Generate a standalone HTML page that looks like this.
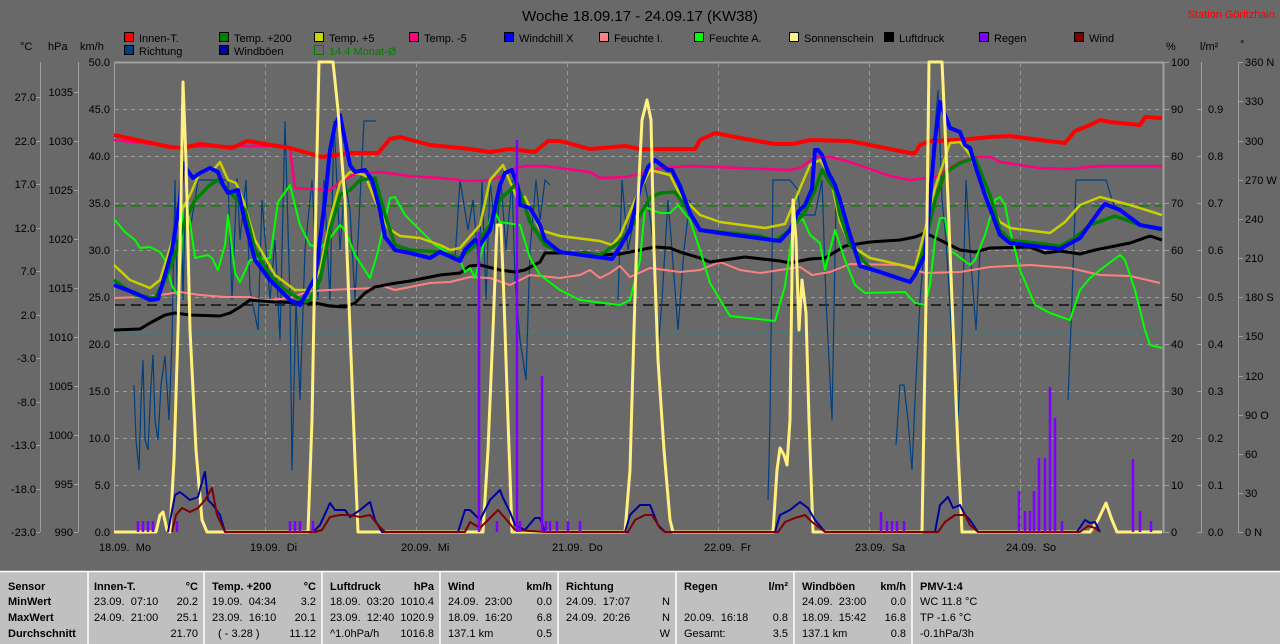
<!DOCTYPE html>
<html><head><meta charset="utf-8"><style>
html,body{margin:0;padding:0;background:#696969;}
svg{display:block;font-family:"Liberation Sans",sans-serif;}
</style></head><body>
<svg width="1280" height="644" viewBox="0 0 1280 644" xmlns="http://www.w3.org/2000/svg">
<rect width="1280" height="644" fill="#696969"/>
<text x="640" y="21" font-size="15" text-anchor="middle" fill="#000">Woche 18.09.17 - 24.09.17 (KW38)</text>
<text x="1275" y="18" font-size="11" text-anchor="end" fill="#ff0000">Station Göritzhain</text>
<g font-size="11" fill="#000">
<g stroke="#000" stroke-width="1">
<rect x="124.5" y="32.5" width="9" height="9" fill="#ff0000"/>
<rect x="219.5" y="32.5" width="9" height="9" fill="#008000"/>
<rect x="314.5" y="32.5" width="9" height="9" fill="#c8d800"/>
<rect x="409.5" y="32.5" width="9" height="9" fill="#ff0080"/>
<rect x="504.5" y="32.5" width="9" height="9" fill="#0000ff"/>
<rect x="599.5" y="32.5" width="9" height="9" fill="#ff8080"/>
<rect x="694.5" y="32.5" width="9" height="9" fill="#00ff00"/>
<rect x="789.5" y="32.5" width="9" height="9" fill="#fff080"/>
<rect x="884.5" y="32.5" width="9" height="9" fill="#000"/>
<rect x="979.5" y="32.5" width="9" height="9" fill="#8000ff"/>
<rect x="1074.5" y="32.5" width="9" height="9" fill="#800000"/>
<rect x="124.5" y="45.5" width="9" height="9" fill="#004080"/>
<rect x="219.5" y="45.5" width="9" height="9" fill="#0000a0"/>
</g>
<rect x="314.5" y="45.5" width="9" height="9" fill="none" stroke="#008000"/>
<text x="139" y="42">Innen-T.</text>
<text x="234" y="42">Temp. +200</text>
<text x="329" y="42">Temp. +5</text>
<text x="424" y="42">Temp. -5</text>
<text x="519" y="42">Windchill X</text>
<text x="614" y="42">Feuchte I.</text>
<text x="709" y="42">Feuchte A.</text>
<text x="804" y="42">Sonnenschein</text>
<text x="899" y="42">Luftdruck</text>
<text x="994" y="42">Regen</text>
<text x="1089" y="42">Wind</text>
<text x="139" y="55">Richtung</text>
<text x="234" y="55">Windböen</text>
<text x="329" y="55" fill="#008000">14.4 Monat-Ø</text>
<text x="20" y="50">°C</text><text x="48" y="50">hPa</text><text x="80" y="50">km/h</text>
<text x="1166" y="50">%</text><text x="1200" y="50">l/m²</text><text x="1240" y="48">°</text>
</g>
<g stroke="#a0a0a0" stroke-width="1" fill="none">
<line x1="40.5" y1="62" x2="40.5" y2="532"/>
<line x1="78.5" y1="62" x2="78.5" y2="532"/>
<line x1="114.5" y1="62" x2="114.5" y2="533"/>
<line x1="114" y1="62.5" x2="1164" y2="62.5" stroke-width="2"/>
<line x1="1163.5" y1="62" x2="1163.5" y2="533" stroke-width="2"/>
<line x1="1201.5" y1="62" x2="1201.5" y2="532"/>
<line x1="1238.5" y1="62" x2="1238.5" y2="532"/>
</g>
<g stroke="#a0a0a0" stroke-width="1">
<path d="M36 97.5h4M36 141.5h4M36 184.5h4M36 228.5h4M36 271.5h4M36 315.5h4M36 358.5h4M36 402.5h4M36 445.5h4M36 489.5h4M36 532.5h4"/>
<path d="M74 92.5h4M74 141.5h4M74 190.5h4M74 239.5h4M74 288.5h4M74 337.5h4M74 386.5h4M74 435.5h4M74 484.5h4M74 532.5h4"/>
<path d="M1164 62.5h5M1164 109.5h5M1164 156.5h5M1164 203.5h5M1164 250.5h5M1164 297.5h5M1164 344.5h5M1164 391.5h5M1164 438.5h5M1164 485.5h5M1164 532.5h5"/>
<path d="M1197 109.5h5M1197 156.5h5M1197 203.5h5M1197 250.5h5M1197 297.5h5M1197 344.5h5M1197 391.5h5M1197 438.5h5M1197 485.5h5M1197 532.5h5"/>
<path d="M1238 62.5h5M1238 101.5h5M1238 141.5h5M1238 180.5h5M1238 219.5h5M1238 258.5h5M1238 297.5h5M1238 336.5h5M1238 376.5h5M1238 415.5h5M1238 454.5h5M1238 493.5h5M1238 532.5h5"/>
</g>
<g font-size="11" fill="#000" text-anchor="end">
<text x="36" y="101">27.0</text><text x="36" y="145">22.0</text><text x="36" y="188">17.0</text><text x="36" y="232">12.0</text><text x="36" y="275">7.0</text><text x="36" y="319">2.0</text><text x="36" y="362">-3.0</text><text x="36" y="406">-8.0</text><text x="36" y="449">-13.0</text><text x="36" y="493">-18.0</text><text x="36" y="536">-23.0</text>
<text x="73" y="96">1035</text><text x="73" y="145">1030</text><text x="73" y="194">1025</text><text x="73" y="243">1020</text><text x="73" y="292">1015</text><text x="73" y="341">1010</text><text x="73" y="390">1005</text><text x="73" y="439">1000</text><text x="73" y="488">995</text><text x="73" y="536">990</text>
<text x="110" y="66">50.0</text><text x="110" y="113">45.0</text><text x="110" y="160">40.0</text><text x="110" y="207">35.0</text><text x="110" y="254">30.0</text><text x="110" y="301">25.0</text><text x="110" y="348">20.0</text><text x="110" y="395">15.0</text><text x="110" y="442">10.0</text><text x="110" y="489">5.0</text><text x="110" y="536">0.0</text>
</g>
<g font-size="11" fill="#000">
<text x="1171" y="66">100</text><text x="1171" y="113">90</text><text x="1171" y="160">80</text><text x="1171" y="207">70</text><text x="1171" y="254">60</text><text x="1171" y="301">50</text><text x="1171" y="348">40</text><text x="1171" y="395">30</text><text x="1171" y="442">20</text><text x="1171" y="489">10</text><text x="1171" y="536">0</text>
<text x="1208" y="113">0.9</text><text x="1208" y="160">0.8</text><text x="1208" y="207">0.7</text><text x="1208" y="254">0.6</text><text x="1208" y="301">0.5</text><text x="1208" y="348">0.4</text><text x="1208" y="395">0.3</text><text x="1208" y="442">0.2</text><text x="1208" y="489">0.1</text><text x="1208" y="536">0.0</text>
<text x="1245" y="66">360 N</text><text x="1245" y="105">330</text><text x="1245" y="145">300</text><text x="1245" y="184">270 W</text><text x="1245" y="223">240</text><text x="1245" y="262">210</text><text x="1245" y="301">180 S</text><text x="1245" y="340">150</text><text x="1245" y="380">120</text><text x="1245" y="419">90 O</text><text x="1245" y="458">60</text><text x="1245" y="497">30</text><text x="1245" y="536">0 N</text>
<text x="99" y="551" xml:space="preserve">18.09.  Mo</text><text x="250" y="551" xml:space="preserve">19.09.  Di</text><text x="401" y="551" xml:space="preserve">20.09.  Mi</text><text x="552" y="551" xml:space="preserve">21.09.  Do</text><text x="704" y="551" xml:space="preserve">22.09.  Fr</text><text x="855" y="551" xml:space="preserve">23.09.  Sa</text><text x="1006" y="551" xml:space="preserve">24.09.  So</text>
</g>
<g stroke="#999" stroke-width="1" stroke-dasharray="4,4" fill="none">
<path d="M115 109.5H1162M115 156.5H1162M115 203.5H1162M115 250.5H1162M115 297.5H1162M115 344.5H1162M115 391.5H1162M115 438.5H1162M115 485.5H1162"/>
<path d="M265.5 63V532M416.5 63V532M567.5 63V532M718.5 63V532M869.5 63V532M1020.5 63V532"/>
</g>
<line x1="115" y1="206" x2="1162" y2="206" stroke="#008000" stroke-width="1.2" stroke-dasharray="10,6"/>
<line x1="115" y1="305" x2="1162" y2="305" stroke="#000" stroke-width="1.2" stroke-dasharray="10,6"/>
<line x1="115" y1="332" x2="1162" y2="332" stroke="#408080" stroke-width="1.2"/>
<polyline fill="none" stroke="#004080" stroke-width="1.2" points="134,385 136,440 139,470 141,400 143,360 145,440 148,450 151,385 153,355 155,420 158,440 161,385 165,356 169,420 172,340 175,180 178,340 181,180 183,300 186,178 190,230 195,200 198,180 228,180 232,300 237,178 240,240 246,180 250,290 258,330 262,200 266,250 270,300 275,240 280,340 285,121 290,300 292,470 296,300 300,400 305,250 312,180 318,300 324,180 330,300 334,121 340,250 345,180 350,210 355,300 360,200 364,121 376,121"/>
<polyline fill="none" stroke="#004080" stroke-width="1.2" points="455,260 460,180 468,230 473,200 479,270 482,180 486,300 490,180 496,240 501,180 506,250 512,180 515,280 520,340 526,380 530,250 536,180 540,220 545,180 550,185"/>
<polyline fill="none" stroke="#004080" stroke-width="1.2" points="618,300 622,180 628,250 634,220 640,170 645,185 648,200 654,250 658,350 662,300 668,200 672,250 678,330 684,250 690,200"/>
<polyline fill="none" stroke="#004080" stroke-width="1.2" points="768,500 770,420 773,180 790,180 798,190 800,215 815,215 822,180 826,300 832,420 836,200"/>
<polyline fill="none" stroke="#004080" stroke-width="1.2" points="896,445 900,385 904,385 908,420 912,470 915,400 920,300 924,250 930,200 934,140 938,90 942,200 946,240 952,340 958,420 962,330 966,180 970,250 976,330 980,250"/>
<polyline fill="none" stroke="#004080" stroke-width="1.2" points="1068,400 1072,300 1076,180 1106,180 1112,200 1116,210"/>
<g fill="none" stroke-linejoin="round">
<polyline stroke="#ff8080" stroke-width="2" points="114,298 140,297 160,295 180,292 200,295 225,297 250,297 260,300 270,300 290,298 310,291 330,290 350,289 375,288 380,285 395,290 410,287 430,283 450,282 470,277 490,278 510,285 530,275 560,278 580,275 590,270 600,278 610,273 620,266 630,277 650,268 680,272 700,270 720,262 740,270 760,273 780,270 800,267 812,275 830,272 850,264 900,265 925,273 960,272 990,267 1030,265 1070,268 1100,275 1130,276 1160,283"/>
<polyline stroke="#000" stroke-width="3" points="114,330 140,329 150,323 165,315 175,313 190,315 220,316 230,313 240,307 250,300 275,302 315,303 330,306 345,307 355,303 365,293 375,287 390,284 410,281 440,275 460,273 470,266 480,265 500,270 515,272 525,270 540,262 545,253 585,253 600,255 620,254 640,250 655,247 670,248 680,252 700,258 710,262 745,257 780,261 790,263 810,259 825,258 845,246 870,242 900,240 915,237 925,233 940,240 960,250 975,252 990,248 1030,247 1045,253 1060,251 1080,254 1095,250 1110,247 1130,243 1150,236 1162,240"/>
<polyline stroke="#00ff00" stroke-width="2" points="114,219 125,232 135,240 140,248 150,247 160,252 165,260 172,286 178,295 181,260 183,205 186,203 190,222 195,258 208,255 212,258 218,270 225,245 228,215 235,273 240,282 250,260 270,258 278,202 290,185 300,225 310,245 320,248 330,238 340,225 345,230 355,255 370,278 377,255 385,220 390,198 395,197 405,215 420,230 435,245 460,260 465,272 470,268 475,278 490,220 495,212 500,222 520,225 530,258 540,275 560,290 580,300 620,305 630,300 640,260 645,207 660,213 670,213 678,205 690,220 700,250 710,283 730,316 775,321 785,286 790,250 795,223 803,219 810,235 820,243 825,270 835,230 845,260 855,285 865,293 905,292 915,303 925,305 930,285 935,240 940,218 945,218 950,250 970,265 975,260 985,235 995,200 1000,197 1005,205 1010,230 1020,270 1035,305 1050,313 1070,320 1080,290 1090,278 1100,270 1120,255 1125,260 1135,290 1145,330 1150,345 1162,348"/>
<polyline stroke="#ff0080" stroke-width="2.5" points="114,140 180,147 240,146 280,146 290,148 295,188 330,190 340,182 355,174 380,172 410,176 440,178 470,181 490,180 505,175 515,168 525,166 545,166 590,172 600,178 625,177 650,172 660,168 690,166 740,168 790,170 800,168 815,157 830,157 850,162 890,176 910,180 935,177 960,162 975,157 990,157 1000,162 1040,168 1070,169 1100,166 1162,166"/>
<polyline stroke="#ff0000" stroke-width="4" points="114,135 170,147 183,148 200,144 232,148 247,141 265,144 290,148 322,157 350,153 378,153 390,139 400,137 430,145 470,149 490,152 510,149 535,152 548,141 560,141 590,149 625,146 640,149 695,149 700,140 715,133 740,138 775,144 793,144 810,140 850,141 880,147 910,153 915,153 920,145 930,141 960,140 990,137 1010,136 1040,140 1065,143 1075,131 1090,125 1100,120 1110,122 1140,125 1145,117 1162,118"/>
<polyline stroke="#c8d000" stroke-width="2.5" points="114,265 130,280 150,288 160,280 175,232 182,210 190,195 200,172 215,168 220,162 228,180 236,183 243,200 255,240 275,275 295,290 310,290 320,270 330,220 340,183 350,172 365,175 375,200 388,228 400,236 420,238 440,245 450,250 460,248 480,225 490,180 503,165 517,198 525,197 540,230 560,236 600,241 612,245 620,236 635,200 650,170 670,175 680,195 700,215 720,222 765,228 785,224 795,200 810,165 820,160 830,175 840,222 850,245 870,258 915,268 925,230 935,188 950,143 960,142 970,155 980,180 990,205 1000,222 1010,228 1050,233 1065,222 1080,205 1100,197 1130,205 1162,215"/>
<polyline stroke="#008000" stroke-width="3.5" points="114,280 135,295 155,298 165,280 175,255 185,220 195,200 210,185 218,180 230,192 245,210 255,250 270,275 285,290 305,302 310,300 320,280 330,230 340,195 350,190 360,180 375,178 385,215 395,245 410,250 440,252 460,258 475,245 490,225 500,200 515,185 520,192 530,222 545,245 560,252 600,255 620,242 640,215 650,198 660,193 675,192 690,213 700,230 760,236 775,241 790,230 805,212 815,190 822,170 835,190 840,215 850,245 870,268 890,276 910,282 915,275 925,245 935,200 945,173 960,163 975,158 990,195 1000,230 1010,240 1060,246 1075,238 1090,225 1115,216 1140,225 1162,230"/>
<polyline stroke="#0000ff" stroke-width="4" points="114,285 135,293 150,300 158,299 165,275 172,250 180,200 183,163 187,170 193,178 200,173 210,168 218,172 223,185 228,193 238,190 245,222 255,260 270,280 290,300 300,305 315,278 320,240 325,200 330,150 335,125 340,115 345,140 350,165 355,172 365,170 372,180 380,210 385,237 395,250 410,253 430,258 440,252 460,261 465,250 475,240 480,245 490,230 500,185 505,173 512,170 518,187 520,205 530,208 540,225 545,240 560,252 612,259 620,247 630,230 640,188 648,167 655,160 668,170 672,170 680,186 690,213 700,230 720,233 780,241 790,230 798,212 805,205 812,189 815,150 818,150 822,155 828,172 835,185 840,200 850,235 860,266 880,272 910,282 915,275 925,255 930,200 935,140 940,102 945,115 950,128 960,132 965,145 970,148 975,165 985,195 1000,235 1010,243 1060,249 1080,238 1100,210 1105,204 1120,210 1140,225 1162,229"/>
<polyline stroke="#fff080" stroke-width="3" points="114,532 156,532 160,515 163,512 167,530 170,532 174,460 178,330 181,200 183,82 186,160 190,330 196,450 202,520 207,532 308,532 312,420 316,200 319,62 333,62 338,110 345,200 350,330 355,460 358,532 483,532 488,450 493,330 497,225 501,225 504,300 508,420 512,532 625,532 630,470 634,330 638,200 642,120 647,100 651,120 654,250 658,360 664,450 670,520 673,532 773,532 777,470 780,448 784,455 787,465 790,420 793,200 796,240 799,330 802,280 806,313 809,420 813,532 922,532 926,300 929,62 942,62 946,150 952,300 958,450 962,532 1090,532 1098,520 1106,503 1112,520 1117,532 1162,532"/>
<polyline stroke="#0000a0" stroke-width="2" points="168,532 175,495 180,492 190,500 198,497 203,478 205,472 208,500 213,505 220,515 225,532 313,532 320,525 330,503 335,510 345,510 350,517 360,510 370,502 375,520 382,532 458,532 465,510 470,510 480,520 490,500 500,490 503,498 510,512 515,525 525,530 535,518 540,518 545,532 625,532 630,515 640,505 650,505 658,525 665,532 775,532 780,515 790,510 800,502 808,508 815,520 825,532 935,532 940,505 948,497 953,508 960,505 965,515 970,520 978,532 1077,532 1085,520 1090,523 1095,522 1100,532"/>
<polyline stroke="#800000" stroke-width="2" points="172,532 176,515 182,508 190,512 198,508 205,500 212,488 217,515 225,532 315,532 322,530 330,517 340,515 350,515 360,517 370,515 378,525 385,532 465,532 470,522 480,528 490,518 498,510 505,518 515,530 545,532 628,532 635,520 645,515 652,515 660,528 665,532 778,532 785,522 795,518 805,515 812,522 825,532 938,532 945,522 955,515 965,515 970,525 978,532 1080,532 1088,526 1095,528 1100,532"/>
</g>
<g stroke="#8000ff" stroke-width="2.5">
<path d="M138 532V521M143 532V521M148 532V521M153 532V521M177 532V521M290 532V521M295 532V521M300 532V521M313 532V521M479 532V232M497 532V521M517 532V140M520 532V521M542 532V376M546 532V521M550 532V521M557 532V521M568 532V521M580 532V521M881 532V512M887 532V521M892 532V521M897 532V521M904 532V521M1019 532V491M1025 532V511M1030 532V511M1034 532V491M1039 532V458M1045 532V458M1050 532V387M1055 532V418M1062 532V521M1133 532V459M1140 532V511M1151 532V521"/>
</g>
<rect x="0" y="571" width="1280" height="73" fill="#c0c0c0"/>
<line x1="0" y1="571.5" x2="1280" y2="571.5" stroke="#fff" stroke-width="1.5"/>
<g stroke="#fff" stroke-width="1.5">
<path d="M88 572V644M204 572V644M322 572V644M440 572V644M558 572V644M676 572V644M794 572V644M912 572V644"/>
</g>
<g font-size="11" fill="#000">
<g font-weight="bold">
<text x="8" y="590">Sensor</text><text x="8" y="605">MinWert</text><text x="8" y="621">MaxWert</text><text x="8" y="637">Durchschnitt</text>
<text x="94" y="590">Innen-T.</text><text x="198" y="590" text-anchor="end">°C</text>
<text x="212" y="590">Temp. +200</text><text x="316" y="590" text-anchor="end">°C</text>
<text x="330" y="590">Luftdruck</text><text x="434" y="590" text-anchor="end">hPa</text>
<text x="448" y="590">Wind</text><text x="552" y="590" text-anchor="end">km/h</text>
<text x="566" y="590">Richtung</text>
<text x="684" y="590">Regen</text><text x="788" y="590" text-anchor="end">l/m²</text>
<text x="802" y="590">Windböen</text><text x="906" y="590" text-anchor="end">km/h</text>
<text x="920" y="590">PMV-1:4</text>
</g>
<text x="94" y="605" xml:space="preserve">23.09.  07:10</text><text x="198" y="605" text-anchor="end">20.2</text>
<text x="94" y="621" xml:space="preserve">24.09.  21:00</text><text x="198" y="621" text-anchor="end">25.1</text>
<text x="198" y="637" text-anchor="end">21.70</text>
<text x="212" y="605" xml:space="preserve">19.09.  04:34</text><text x="316" y="605" text-anchor="end">3.2</text>
<text x="212" y="621" xml:space="preserve">23.09.  16:10</text><text x="316" y="621" text-anchor="end">20.1</text>
<text x="218" y="637" xml:space="preserve">( - 3.28 )</text><text x="316" y="637" text-anchor="end">11.12</text>
<text x="330" y="605" xml:space="preserve">18.09.  03:20</text><text x="434" y="605" text-anchor="end">1010.4</text>
<text x="330" y="621" xml:space="preserve">23.09.  12:40</text><text x="434" y="621" text-anchor="end">1020.9</text>
<text x="330" y="637">^1.0hPa/h</text><text x="434" y="637" text-anchor="end">1016.8</text>
<text x="448" y="605" xml:space="preserve">24.09.  23:00</text><text x="552" y="605" text-anchor="end">0.0</text>
<text x="448" y="621" xml:space="preserve">18.09.  16:20</text><text x="552" y="621" text-anchor="end">6.8</text>
<text x="448" y="637">137.1 km</text><text x="552" y="637" text-anchor="end">0.5</text>
<text x="566" y="605" xml:space="preserve">24.09.  17:07</text><text x="670" y="605" text-anchor="end">N</text>
<text x="566" y="621" xml:space="preserve">24.09.  20:26</text><text x="670" y="621" text-anchor="end">N</text>
<text x="670" y="637" text-anchor="end">W</text>
<text x="684" y="621" xml:space="preserve">20.09.  16:18</text><text x="788" y="621" text-anchor="end">0.8</text>
<text x="684" y="637">Gesamt:</text><text x="788" y="637" text-anchor="end">3.5</text>
<text x="802" y="605" xml:space="preserve">24.09.  23:00</text><text x="906" y="605" text-anchor="end">0.0</text>
<text x="802" y="621" xml:space="preserve">18.09.  15:42</text><text x="906" y="621" text-anchor="end">16.8</text>
<text x="802" y="637">137.1 km</text><text x="906" y="637" text-anchor="end">0.8</text>
<text x="920" y="605">WC 11.8 °C</text><text x="920" y="621">TP -1.6 °C</text><text x="920" y="637">-0.1hPa/3h</text>
</g>
</svg>
</body></html>
